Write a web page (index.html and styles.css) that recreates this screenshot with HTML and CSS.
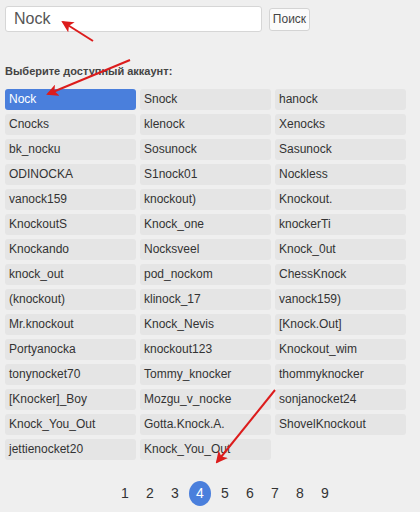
FILE: index.html
```html
<!DOCTYPE html>
<html lang="ru">
<head>
    <meta charset="UTF-8">
    <meta name="viewport" content="width=device-width, initial-scale=1.0">
    <title>Выбор аккаунта</title>
    <link rel="stylesheet" href="styles.css">
</head>
<body>
    <div class="page">
        <form class="search">
            <input type="text" class="search-input" value="Nock">
            <button type="button" class="search-btn">Поиск</button>
        </form>

        <div class="label">Выберите доступный аккаунт:</div>

        <div class="accounts">
            <div class="account active">Nock</div>
            <div class="account">Snock</div>
            <div class="account">hanock</div>
            <div class="account">Cnocks</div>
            <div class="account">klenock</div>
            <div class="account">Xenocks</div>
            <div class="account">bk_nocku</div>
            <div class="account">Sosunock</div>
            <div class="account">Sasunock</div>
            <div class="account">ODINOCKA</div>
            <div class="account">S1nock01</div>
            <div class="account">Nockless</div>
            <div class="account">vanock159</div>
            <div class="account">knockout)</div>
            <div class="account">Knockout.</div>
            <div class="account">KnockoutS</div>
            <div class="account">Knock_one</div>
            <div class="account">knockerTi</div>
            <div class="account">Knockando</div>
            <div class="account">Nocksveel</div>
            <div class="account">Knock_0ut</div>
            <div class="account">knock_out</div>
            <div class="account">pod_nockom</div>
            <div class="account">ChessKnock</div>
            <div class="account">(knockout)</div>
            <div class="account">klinock_17</div>
            <div class="account">vanock159)</div>
            <div class="account">Mr.knockout</div>
            <div class="account">Knock_Nevis</div>
            <div class="account">[Knock.Out]</div>
            <div class="account">Portyanocka</div>
            <div class="account">knockout123</div>
            <div class="account">Knockout_wim</div>
            <div class="account">tonynocket70</div>
            <div class="account">Tommy_knocker</div>
            <div class="account">thommyknocker</div>
            <div class="account">[Knocker]_Boy</div>
            <div class="account">Mozgu_v_nocke</div>
            <div class="account">sonjanocket24</div>
            <div class="account">Knock_You_Out</div>
            <div class="account">Gotta.Knock.A.</div>
            <div class="account">ShovelKnockout</div>
            <div class="account">jettienocket20</div>
            <div class="account">Knock_You_Out</div>
        </div>

        <div class="pager">
            <a>1</a>
            <a>2</a>
            <a>3</a>
            <a class="current">4</a>
            <a>5</a>
            <a>6</a>
            <a>7</a>
            <a>8</a>
            <a>9</a>
        </div>
    </div>

    <!-- red pointer arrows drawn over the page -->
    <svg class="marks" width="420" height="512" viewBox="0 0 420 512">
        <defs>
            <marker id="head" markerWidth="6" markerHeight="6" refX="5" refY="3" orient="auto" markerUnits="strokeWidth">
                <path d="M0,0 L6,3 L0,6 L1.5,3 Z" fill="#dc1c1c"/>
            </marker>
        </defs>
        <line x1="93" y1="41" x2="63" y2="22" stroke="#dc1c1c" stroke-width="2" marker-end="url(#head)"/>
        <line x1="130" y1="60" x2="48" y2="94" stroke="#dc1c1c" stroke-width="2" marker-end="url(#head)"/>
        <line x1="275" y1="390" x2="217" y2="462" stroke="#dc1c1c" stroke-width="2" marker-end="url(#head)"/>
    </svg>
</body>
</html>
```

FILE: styles.css
```css
body {
    margin: 0;
    background-color: #efefef;
    font-family: "Liberation Sans", Arial, sans-serif;
    color: #333;
}
.page {
    width: 401px;
    padding: 6px 5px 0;
}
.search {
    display: flex;
    align-items: center;
    margin: 0;
}
.search-input {
    width: 257px;
    height: 26px;
    box-sizing: border-box;
    padding: 0 8px;
    border: 1px solid #d6d6d6;
    border-radius: 3px;
    background-color: #fff;
    font-family: inherit;
    font-size: 16px;
    color: #555;
}
.search-btn {
    margin-left: 7px;
    width: 41px;
    height: 23px;
    padding: 0;
    border: 1px solid #d4d4d4;
    border-radius: 3px;
    background-color: #fbfbfb;
    font-family: inherit;
    font-size: 12px;
    color: #444;
}
.label {
    margin-top: 32px;
    font-size: 11px;
    font-weight: bold;
    color: #444;
    line-height: 14px;
}
.accounts {
    display: grid;
    grid-template-columns: repeat(3, 1fr);
    gap: 4px;
    margin-top: 11px;
}
.account {
    height: 21px;
    line-height: 21px;
    padding: 0 4px;
    border-radius: 3px;
    background-color: #e5e5e5;
    font-size: 12px;
    color: #333;
    white-space: nowrap;
}
.account.active {
    background-color: #4a7fdc;
    color: #fff;
}
.pager {
    display: flex;
    gap: 3px;
    margin-top: 21px;
    padding-left: 109px;
}
.pager a {
    width: 22px;
    height: 25px;
    line-height: 25px;
    text-align: center;
    font-size: 14px;
    color: #333;
}
.pager a.current {
    border-radius: 50%;
    background-color: #4a7fdc;
    color: #fff;
}
.marks {
    position: absolute;
    top: 0;
    left: 0;
    pointer-events: none;
}
```
